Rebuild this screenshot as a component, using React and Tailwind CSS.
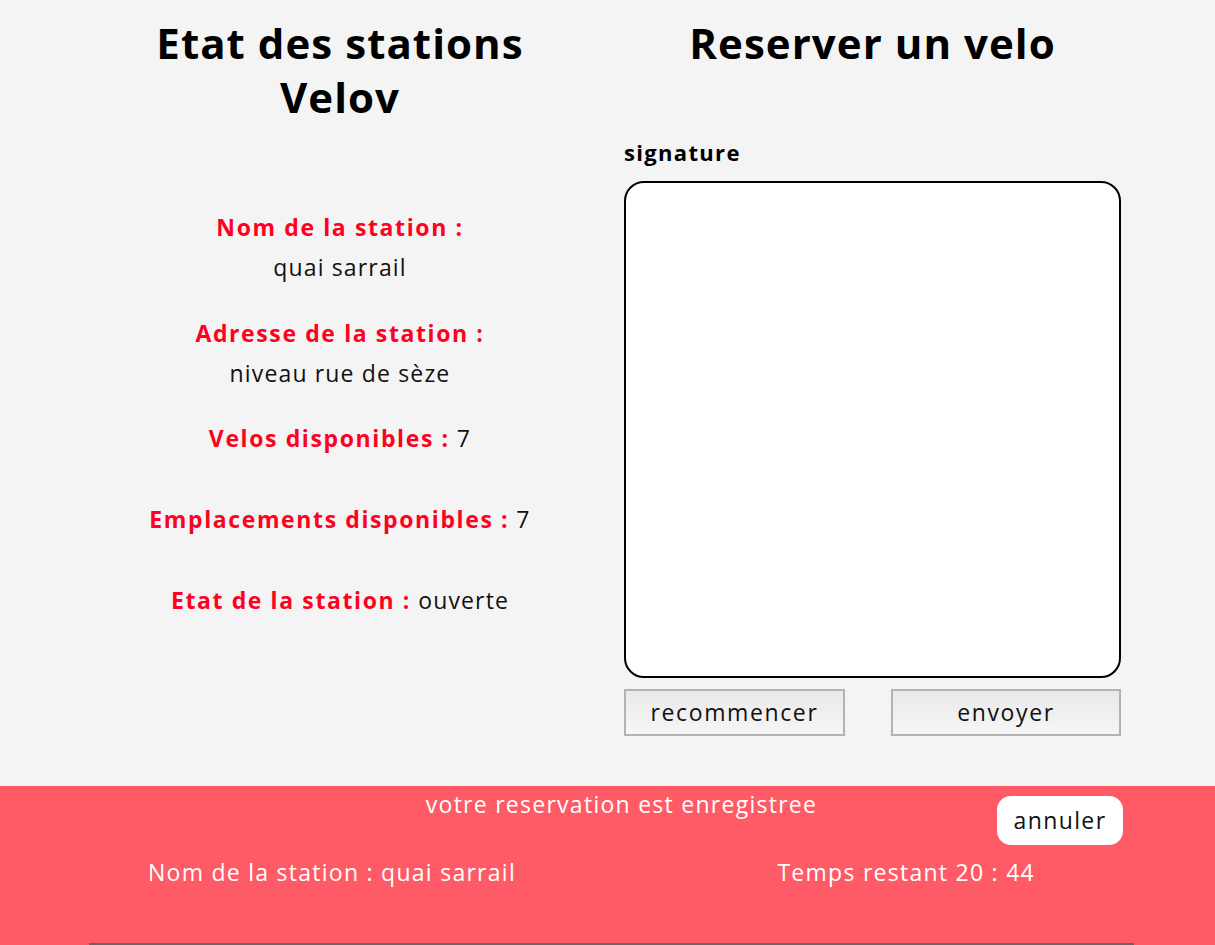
export default function App(){
  const info = [
    { label: "Nom de la station :", value: "quai sarrail" },
    { label: "Adresse de la station :", value: "niveau rue de sèze" },
  ];
  const lbl = "font-bold text-[#ff001e] tracking-[0.07em]";
  return (
    <div className="min-h-screen bg-[#f4f4f4] text-[#111]" style={{fontFamily:"'Open Sans', Lato, sans-serif"}}>
      <div className="h-[786px] flex pl-[90px]">
        <section className="w-[500px] flex flex-col items-center">
          <h1 className="text-[42px] font-bold leading-[54px] tracking-[0.025em] text-center mt-[16px] text-black">Etat des stations<br/>Velov</h1>
          <div className="mt-[83px] flex flex-col items-center text-[23px] tracking-[0.05em] text-center">
            {info.map(i=>(
              <div key={i.label} className="mb-[26px] leading-[40px]">
                <div className={lbl}>{i.label}</div>
                <div>{i.value}</div>
              </div>
            ))}
            <p className="leading-[40px] mt-[-1px]"><span className={lbl}>Velos disponibles :</span> 7</p>
            <p className="leading-[40px] mt-[41px]"><span className={lbl}>Emplacements disponibles :</span> 7</p>
            <p className="leading-[40px] mt-[41px]"><span className={lbl}>Etat de la station :</span> ouverte</p>
          </div>
        </section>
        <section className="ml-[34px] w-[497px] flex flex-col">
          <h1 className="text-[42px] font-bold leading-[54px] tracking-[0.025em] text-center mt-[16px] text-black">Reserver un velo</h1>
          <label className="mt-[67px] text-[22px] font-bold leading-[30px] tracking-[0.06em] text-black">signature</label>
          <div className="mt-[14px] h-[497px] bg-white border-2 border-black rounded-[20px]"></div>
          <div className="mt-[11px] flex justify-between">
            <button className="w-[221px] h-[47px] border-2 border-[#b3b3b3] bg-gradient-to-b from-[#e9e9e9] to-[#f6f6f6] text-[23px] tracking-[0.07em]">recommencer</button>
            <button className="w-[230px] h-[47px] border-2 border-[#b3b3b3] bg-gradient-to-b from-[#e9e9e9] to-[#f6f6f6] text-[23px] tracking-[0.07em]">envoyer</button>
          </div>
        </section>
      </div>
      <footer className="h-[159px] bg-[#ff5b66] flex flex-col text-white text-[23px] tracking-[0.055em]">
        <div className="relative flex justify-center pt-[2px]">
          <p className="leading-[32px] ml-[28px]">votre reservation est enregistree</p>
          <button className="absolute left-[997px] top-[10px] w-[126px] h-[49px] bg-white rounded-[14px] text-[#111] text-[23px] tracking-[0.06em]">annuler</button>
        </div>
        <div className="flex mt-[36px] leading-[32px]">
          <p className="ml-[148px]">Nom de la station : quai sarrail</p>
          <p className="ml-auto mr-[180px]">Temps restant 20 : 44</p>
        </div>
        <div className="mt-auto mx-[89px] mr-[81px] h-[2px] bg-[#666]"></div>
      </footer>
    </div>
  );
}
